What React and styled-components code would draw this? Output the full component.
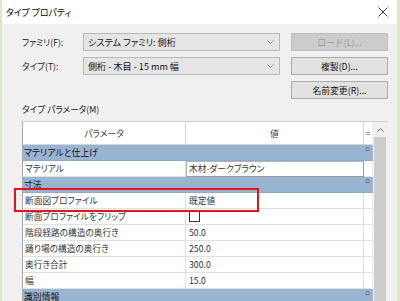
import React from 'react';
import styled, { createGlobalStyle } from 'styled-components';

const GlobalStyle = createGlobalStyle`
  html, body {
    margin: 0;
    padding: 0;
    background: #f0f0f0;
  }
  body {
    font-family: "Noto Sans CJK JP", "Noto Sans", sans-serif;
    font-feature-settings: "palt";
    color: #1a1a1a;
  }
`;

const Window = styled.div`
  position: relative;
  width: 400px;
  height: 301px;
  box-sizing: border-box;
  border-left: 2px solid #dde8c6;
  border-right: 3px solid #dde8c6;
  background: #f0f0f0;
  overflow: hidden;
  display: flex;
  flex-direction: column;
`;

const TitleBar = styled.div`
  height: 24px;
  flex: none;
  background: #fff;
  display: flex;
  align-items: center;
  justify-content: space-between;
  padding: 0 9px 0 4px;
  font-size: 8.9px;
  color: #000;
`;

const Body = styled.div`
  padding: 9px 0 0 20px;
  display: flex;
  flex-direction: column;
`;

const Top = styled.div`
  display: flex;
`;

const Fields = styled.div`
  display: flex;
  flex-direction: column;
  gap: 6px;
  width: 258px;
`;

const FieldRow = styled.div`
  display: flex;
  align-items: center;
  height: 18px;
`;

const Label = styled.label`
  width: 61px;
  font-size: 8.6px;
  color: #222;
`;

const Combo = styled.div`
  flex: 1;
  height: 18px;
  box-sizing: border-box;
  background: #e5e5e5;
  border: 1px solid #b9b9b9;
  display: flex;
  align-items: center;
  justify-content: space-between;
  padding: 0 5px 0 4px;
  font-size: 9.1px;
  color: #111;
`;

const Buttons = styled.div`
  display: flex;
  flex-direction: column;
  gap: 6px;
  margin-left: 11px;
  width: 97px;
`;

const Button = styled.button`
  height: 18px;
  box-sizing: border-box;
  padding: 0;
  font-family: inherit;
  font-size: 8.8px;
  background: ${(p) => (p.disabled ? '#cccccc' : '#e1e1e1')};
  border: 1px solid ${(p) => (p.disabled ? '#bfbfbf' : '#adadad')};
  color: ${(p) => (p.disabled ? '#9d9d9d' : '#111')};
`;

const SectionLabel = styled.div`
  margin-top: 5px;
  height: 12px;
  line-height: 12px;
  font-size: 8.7px;
  color: #222;
  margin-bottom: 5px;
`;

const TableBox = styled.div`
  display: flex;
  width: 366px;
  border-top: 1px solid #cfcfcf;
`;

const Grid = styled.div`
  width: 350px;
  display: grid;
  grid-template-columns: 163px 178px 9px;
  grid-template-rows: 23px;
  grid-auto-rows: 16px;
  border-left: 1px solid #a8a8a8;
  box-sizing: border-box;
`;

const HeadCell = styled.div`
  box-sizing: border-box;
  background: #fff;
  border-right: 1px solid #d7d7d7;
  border-bottom: 1px solid #d7d7d7;
  display: flex;
  align-items: center;
  justify-content: center;
  font-size: 8.8px;
  color: #444;
`;

const GroupRow = styled.div`
  grid-column: 1 / -1;
  position: relative;
  background: #99b4d1;
  border-bottom: 1px solid #8fa9c6;
  box-sizing: border-box;
  padding-left: 1px;
  font-size: 8.9px;
  line-height: 15px;
  color: #111;
`;

const Collapse = styled.svg`
  position: absolute;
  right: 3px;
  top: 1px;
`;

const Cell = styled.div`
  box-sizing: border-box;
  background: #fff;
  border-right: 1px solid #e0e0e0;
  border-bottom: 1px solid #e0e0e0;
  padding-left: ${(p) => (p.value ? 3 : 2)}px;
  font-size: 8.7px;
  line-height: 15px;
  color: #333;
  white-space: nowrap;
  overflow: hidden;
  display: flex;
  align-items: center;
`;

const EditBox = styled.div`
  box-sizing: border-box;
  background: #fff;
  border: 1px solid #b4b4b4;
  border-right-color: #9a9a9a;
  border-bottom-color: #9a9a9a;
  padding-left: 2px;
  font-size: 8.7px;
  line-height: 14px;
  color: #333;
  white-space: nowrap;
`;

const Check = styled.span`
  width: 9px;
  height: 9px;
  border: 1px solid #333;
  background: #fff;
`;

const ScrollBar = styled.div`
  width: 16px;
  display: flex;
  flex-direction: column;
  background: #f0f0f0;
`;

const ScrollBtn = styled.div`
  height: 15px;
  display: flex;
  align-items: center;
  justify-content: center;
`;

const Thumb = styled.div`
  flex: 1;
  margin: 0 2px 0 2px;
  background: #cdcdcd;
`;

const Highlight = styled.div`
  position: absolute;
  left: 12px;
  top: 188px;
  width: 245px;
  height: 24px;
  box-sizing: border-box;
  border: 2px solid #e5141c;
`;

const Chevron = () => (
  <svg width="7" height="4" viewBox="0 0 7 4">
    <path d="M0.5 0.5 L3.5 3.5 L6.5 0.5" fill="none" stroke="#888" strokeWidth="0.9" />
  </svg>
);

const groups = [
  { title: 'マテリアルと仕上げ', rows: [['マテリアル', 'edit', '木材-ダークブラウン']] },
  {
    title: '寸法',
    rows: [
      ['断面図プロファイル', 'text', '既定値'],
      ['断面プロファイルをフリップ', 'check', ''],
      ['階段経路の構造の奥行き', 'text', '50.0'],
      ['踊り場の構造の奥行き', 'text', '250.0'],
      ['奥行き合計', 'text', '300.0'],
      ['幅', 'text', '15.0'],
    ],
  },
  { title: '識別情報', rows: [] },
];

export default function App() {
  return (
    <>
      <GlobalStyle />
      <Window>
        <TitleBar>
          <span>タイプ プロパティ</span>
          <svg width="10" height="10" viewBox="0 0 10 10">
            <path d="M0.5 0.5 L9.5 9.5 M9.5 0.5 L0.5 9.5" stroke="#222" strokeWidth="0.9" />
          </svg>
        </TitleBar>
        <Body>
          <Top>
            <Fields>
              <FieldRow>
                <Label>ファミリ(F):</Label>
                <Combo>
                  <span>システム ファミリ: 側桁</span>
                  <Chevron />
                </Combo>
              </FieldRow>
              <FieldRow>
                <Label>タイプ(T):</Label>
                <Combo>
                  <span>側桁 - 木目 - 15 mm 幅</span>
                  <Chevron />
                </Combo>
              </FieldRow>
            </Fields>
            <Buttons>
              <Button disabled>ロード(L)...</Button>
              <Button>複製(D)...</Button>
              <Button>名前変更(R)...</Button>
            </Buttons>
          </Top>
          <SectionLabel>タイプ パラメータ(M)</SectionLabel>
          <TableBox>
            <Grid>
              <HeadCell>パラメータ</HeadCell>
              <HeadCell>値</HeadCell>
              <HeadCell>=</HeadCell>
              {groups.map((g) => (
                <React.Fragment key={g.title}>
                  <GroupRow>
                    {g.title}
                    <Collapse width="5" height="5" viewBox="0 0 5 5">
                      <path d="M0.5 3 L2.5 1 L4.5 3 M0.5 4.5 H4.5" fill="none" stroke="#556" strokeWidth="0.8" />
                    </Collapse>
                  </GroupRow>
                  {g.rows.map(([name, kind, val]) => (
                    <React.Fragment key={name}>
                      <Cell>{name}</Cell>
                      {kind === 'edit' ? (
                        <EditBox>{val}</EditBox>
                      ) : (
                        <Cell value>{kind === 'check' ? <Check /> : val}</Cell>
                      )}
                      <Cell />
                    </React.Fragment>
                  ))}
                </React.Fragment>
              ))}
            </Grid>
            <ScrollBar>
              <ScrollBtn>
                <svg width="7" height="4" viewBox="0 0 7 4">
                  <path d="M0.5 3.5 L3.5 0.5 L6.5 3.5" fill="none" stroke="#555" strokeWidth="0.9" />
                </svg>
              </ScrollBtn>
              <Thumb />
            </ScrollBar>
          </TableBox>
        </Body>
        <Highlight />
      </Window>
    </>
  );
}
